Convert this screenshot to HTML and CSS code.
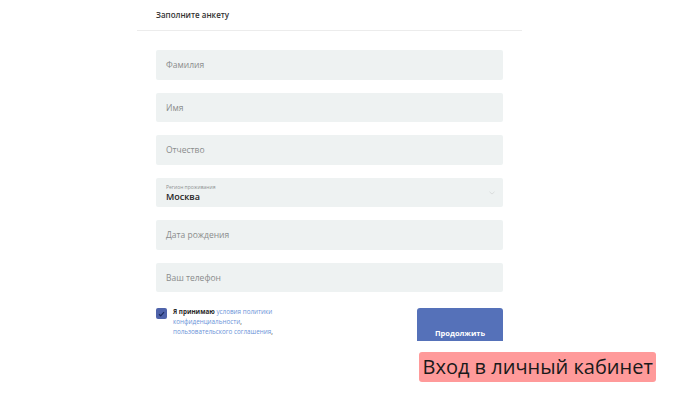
FILE: index.html
```html
<!DOCTYPE html>
<html lang="ru">
<head>
<meta charset="utf-8">
<link rel="stylesheet" href="styles.css">
</head>
<body>
<div class="page">
  <div class="card">
    <div class="card-head">Заполните анкету</div>
    <div class="fields">
      <div class="field"><span class="ph">Фамилия</span></div>
      <div class="field"><span class="ph">Имя</span></div>
      <div class="field"><span class="ph">Отчество</span></div>
      <div class="field select">
        <div class="sel-text">
          <span class="sel-label">Регион проживания</span>
          <span class="sel-value">Москва</span>
        </div>
        <svg class="chev" width="6" height="4" viewBox="0 0 6 4"><path d="M0.5 0.8 L3 3 L5.5 0.8" fill="none" stroke="#d4d8d8" stroke-width="0.8"/></svg>
      </div>
      <div class="field"><span class="ph">Дата рождения</span></div>
      <div class="field"><span class="ph">Ваш телефон</span></div>
    </div>
    <div class="bottom">
      <div class="agree">
        <span class="check"><svg width="7" height="6" viewBox="0 0 7 6"><path d="M1 3.2 L2.7 4.8 L6 1.2" fill="none" stroke="#1c2b5e" stroke-width="1.2"/></svg></span>
        <div class="agree-text">
          <div class="line"><b>Я принимаю</b>&nbsp;<span class="link">условия политики</span></div>
          <div class="line"><span class="link">конфиденциальности</span>,</div>
          <div class="line"><span class="link">пользовательского соглашения</span>,</div>
        </div>
      </div>
      <button class="btn">Продолжить</button>
    </div>
  </div>
  <div class="tag">Вход в личный кабинет</div>
</div>
</body>
</html>
```
FILE: styles.css
```css
html, body {
  margin: 0;
  padding: 0;
  background: #ffffff;
}
body {
  font-family: "Open Sans", "Liberation Sans", sans-serif;
  width: 700px;
  height: 400px;
  overflow: hidden;
}
.page {
  position: relative;
  width: 700px;
  height: 400px;
}
.card {
  margin-left: 137px;
  width: 385px;
  height: 341px;
  overflow: hidden;
}
.card-head {
  height: 31px;
  box-sizing: border-box;
  border-bottom: 1px solid #ececec;
  padding-left: 19px;
  padding-top: 8px;
  font-size: 8px;
  font-weight: 600;
  line-height: 13px;
  color: #333333;
}
.fields {
  padding: 19px 19px 0;
  display: flex;
  flex-direction: column;
  gap: 13px;
}
.field {
  height: 29.5px;
  background: #eef2f2;
  border-radius: 2px;
  display: flex;
  align-items: center;
  padding-left: 10px;
  padding-right: 8px;
}
.ph {
  font-size: 8.5px;
  color: #8a8c8c;
}
.select {
  justify-content: space-between;
}
.sel-text {
  display: flex;
  flex-direction: column;
  padding-top: 2px;
}
.sel-label {
  font-size: 5px;
  line-height: 7px;
  color: #8f9393;
}
.sel-value {
  font-size: 9px;
  font-weight: 600;
  line-height: 11px;
  color: #1e1e1e;
}
.chev {
  margin-top: 1px;
}
.bottom {
  display: flex;
  justify-content: space-between;
  align-items: flex-start;
  padding: 15px 19px 0;
}
.agree {
  display: flex;
  gap: 6px;
}
.check {
  width: 11px;
  height: 11px;
  margin-top: 1px;
  background: #4f63aa;
  border-radius: 2px;
  display: flex;
  align-items: center;
  justify-content: center;
}
.agree-text {
  width: 110px;
  font-size: 6.3px;
  line-height: 10px;
  color: #2a2a2a;
}
.line {
  white-space: nowrap;
}
.agree-text b {
  font-weight: 700;
}
.link {
  color: #6a93d8;
}
.btn {
  width: 86px;
  height: 50px;
  margin-top: 1px;
  border: 0;
  border-radius: 3px;
  background: #5571b9;
  color: #ffffff;
  font-family: "Open Sans", "Liberation Sans", sans-serif;
  font-size: 7.5px;
  font-weight: 700;
  padding: 0;
}
.tag {
  position: absolute;
  left: 419px;
  top: 352px;
  height: 30px;
  padding: 0 3.5px;
  box-sizing: border-box;
  background: #ff9a9a;
  border-radius: 3px;
  font-size: 20px;
  line-height: 30px;
  color: #1a1a1a;
}
```
